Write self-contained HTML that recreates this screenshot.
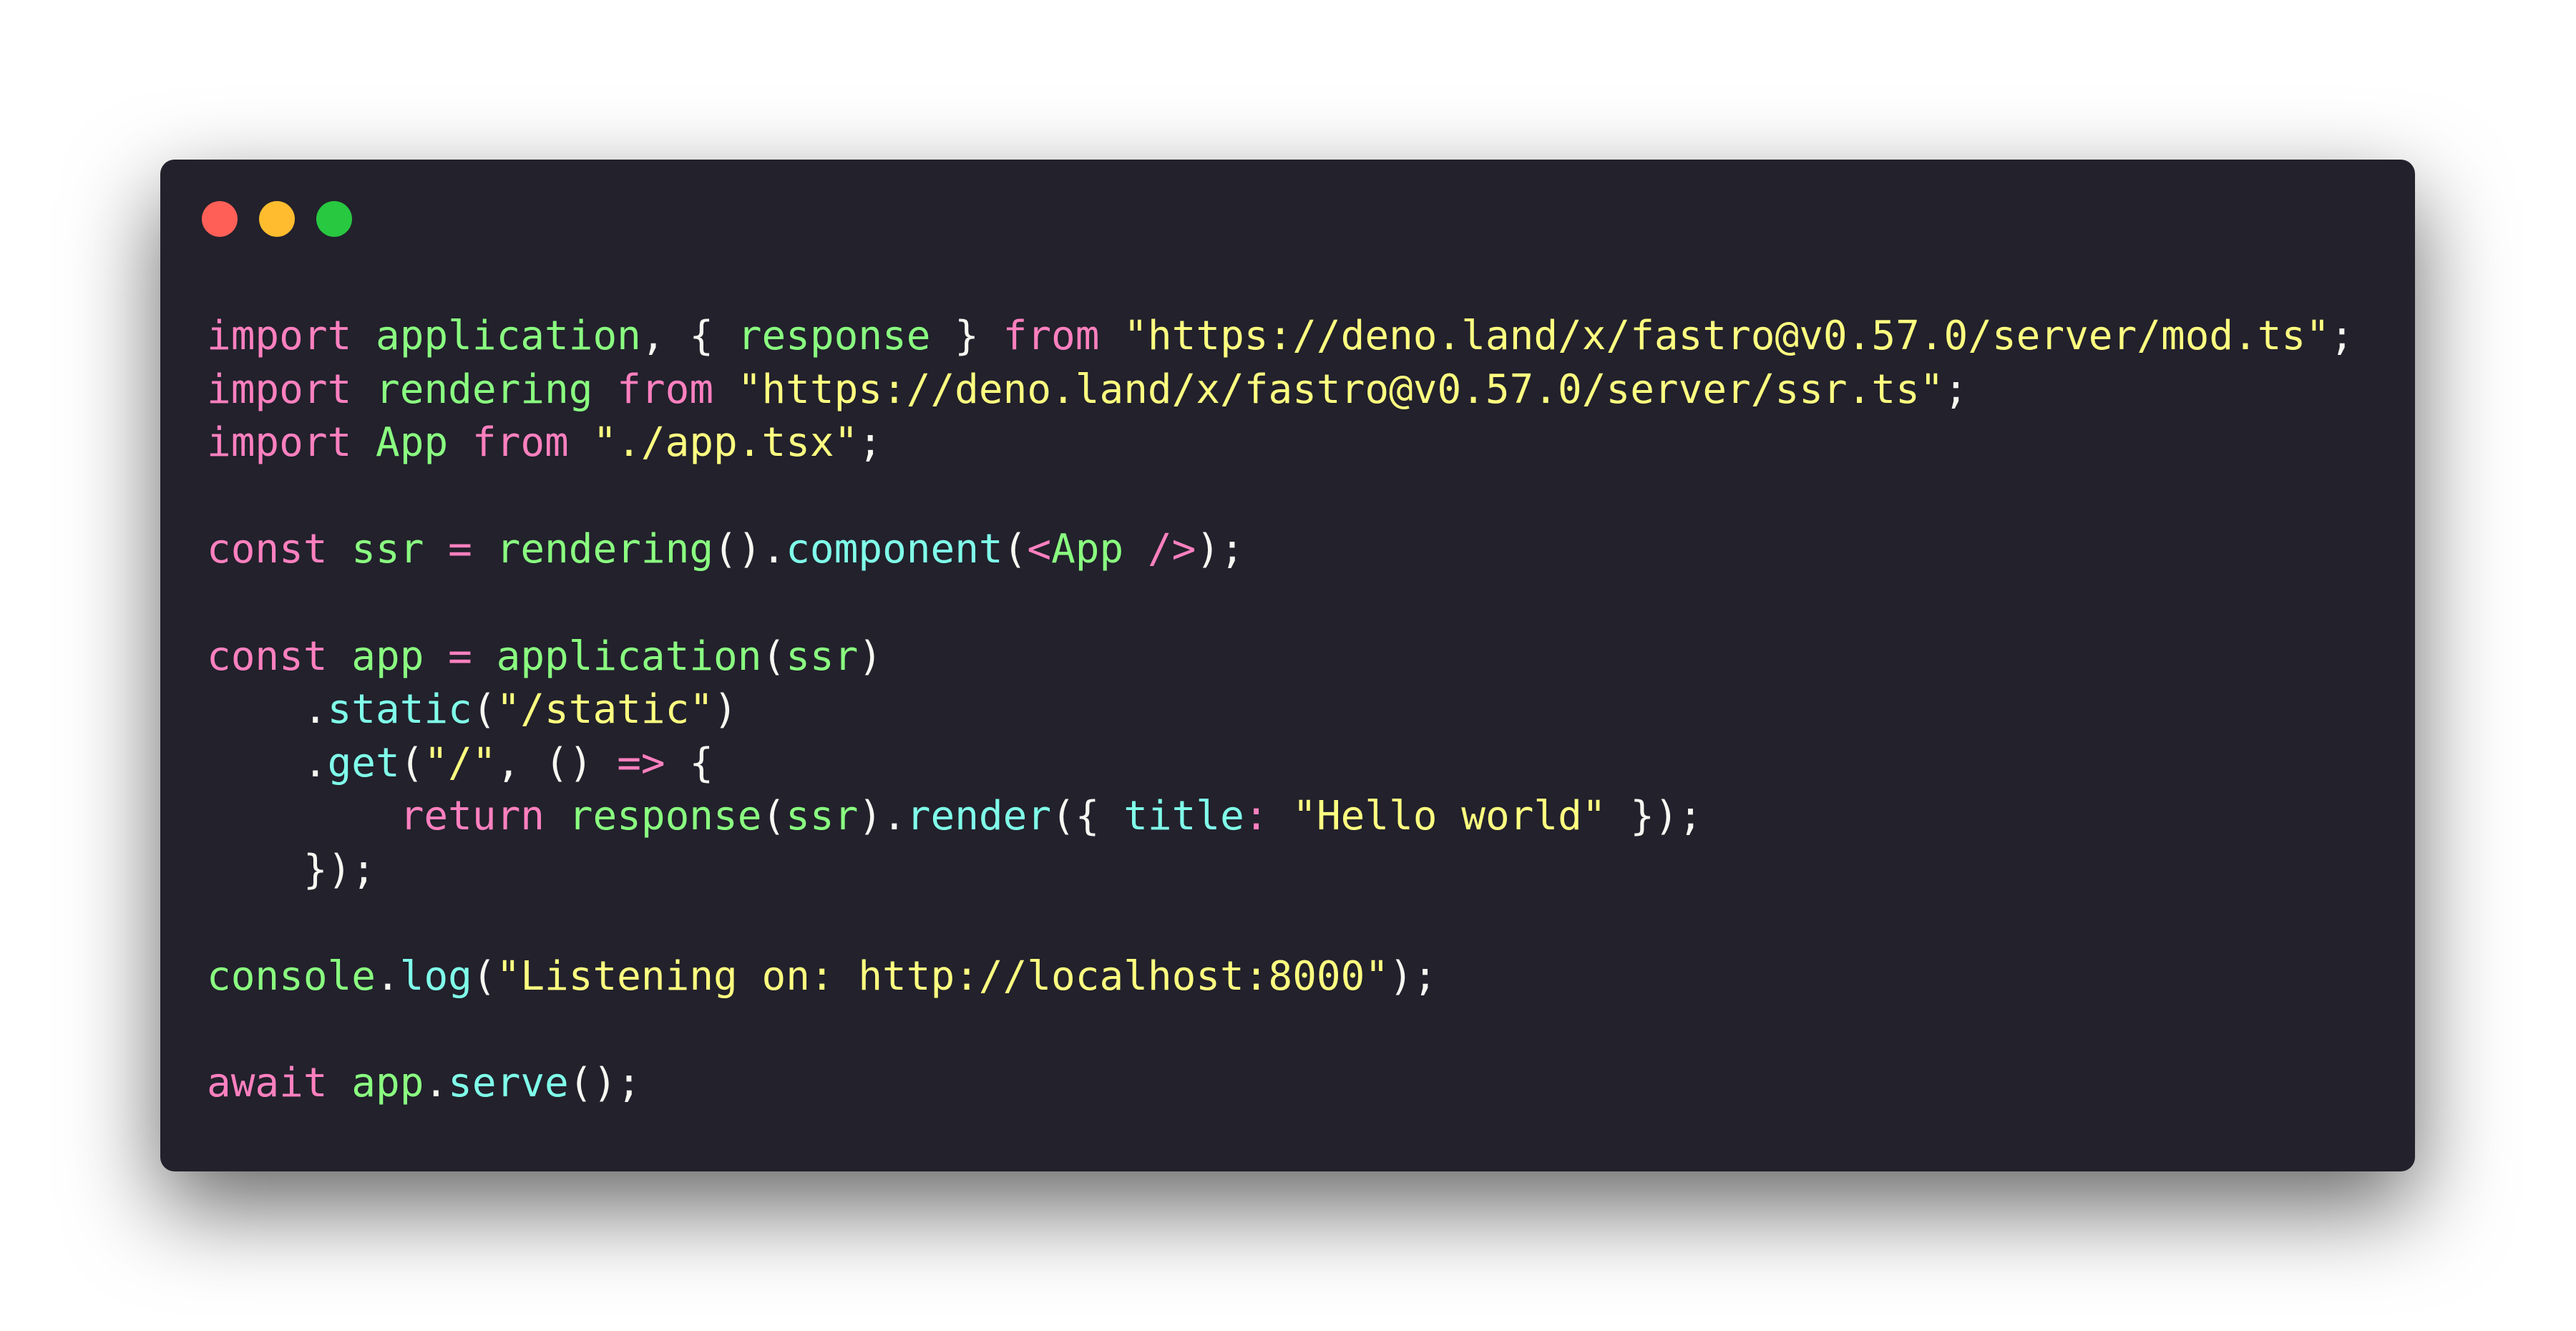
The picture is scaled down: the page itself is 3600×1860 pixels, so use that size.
<!DOCTYPE html>
<html><head><meta charset="utf-8"><style>
html,body{margin:0;padding:0;width:3600px;height:1860px;background:#ffffff;overflow:hidden}
.win{position:absolute;left:224px;top:223px;width:3151px;height:1414px;background:#22212c;border-radius:20px;box-shadow:0 50px 180px rgba(0,0,0,0.6)}
.dot{position:absolute;top:281px;width:50px;height:50px;border-radius:50%}
pre{position:absolute;left:289px;top:433px;margin:0;font-family:"DejaVu Sans Mono","Liberation Mono",monospace;font-size:56px;line-height:74.6px;color:#f8f8f2;white-space:pre}
.k{color:#ff80bf}.g{color:#8aff80}.y{color:#ffff80}.c{color:#80ffea}
</style></head><body>
<div class="win"></div>
<div class="dot" style="left:282px;background:#ff5f57"></div>
<div class="dot" style="left:362px;background:#febc2e"></div>
<div class="dot" style="left:442px;background:#28c840"></div>
<pre><span class="k">import</span> <span class="g">application</span>, { <span class="g">response</span> } <span class="k">from</span> <span class="y">"https://deno.land/x/fastro@v0.57.0/server/mod.ts"</span>;
<span class="k">import</span> <span class="g">rendering</span> <span class="k">from</span> <span class="y">"https://deno.land/x/fastro@v0.57.0/server/ssr.ts"</span>;
<span class="k">import</span> <span class="g">App</span> <span class="k">from</span> <span class="y">"./app.tsx"</span>;

<span class="k">const</span> <span class="g">ssr</span> <span class="k">=</span> <span class="g">rendering</span>().<span class="c">component</span>(<span class="k">&lt;</span><span class="g">App</span> <span class="k">/&gt;</span>);

<span class="k">const</span> <span class="g">app</span> <span class="k">=</span> <span class="g">application</span>(<span class="g">ssr</span>)
    .<span class="c">static</span>(<span class="y">"/static"</span>)
    .<span class="c">get</span>(<span class="y">"/"</span>, () <span class="k">=&gt;</span> {
        <span class="k">return</span> <span class="g">response</span>(<span class="g">ssr</span>).<span class="c">render</span>({ <span class="c">title</span><span class="k">:</span> <span class="y">"Hello world"</span> });
    });

<span class="g">console</span>.<span class="c">log</span>(<span class="y">"Listening on: http://localhost:8000"</span>);

<span class="k">await</span> <span class="g">app</span>.<span class="c">serve</span>();</pre>
</body></html>
